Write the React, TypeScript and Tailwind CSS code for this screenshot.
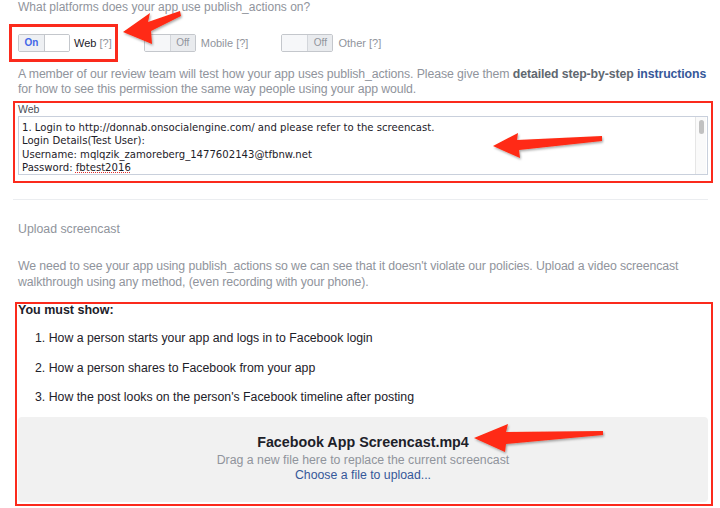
import React from "react";

function Toggle({ on }: { on: boolean }) {
  return (
    <div className="flex h-[18px] w-[52px] shrink-0 rounded-[2px] border border-[#c4c7cc] overflow-hidden text-[10px] leading-[16px]">
      {on ? (
        <>
          <div className="w-[26px] bg-[#eef0f3] text-[#4267e8] font-bold text-center border-r border-[#c4c7cc]">On</div>
          <div className="flex-1 bg-white" />
        </>
      ) : (
        <>
          <div className="w-[26px] bg-[#f6f7f9] border-r border-[#d3d6db]" />
          <div className="flex-1 bg-[#e9ebee] text-[#90949c] text-center">Off</div>
        </>
      )}
    </div>
  );
}

export default function App() {
  return (
    <div
      className="relative w-[720px] h-[508px] overflow-hidden bg-white text-[#90949c]"
      style={{ fontFamily: '"Liberation Sans", Arial, sans-serif' }}
    >
      <div className="pl-[18px] text-[12px] leading-[14px] pt-0">What platforms does your app use publish_actions on?</div>

      <div className="flex items-center mt-[10px] whitespace-nowrap">
        <div className="ml-[9px] flex items-center gap-[4px] border-[3px] border-[#fb2a1c] pl-[6px] pr-[3px] py-[7px] h-[38px]">
          <Toggle on />
          <span className="text-[11px] text-[#1d2129]">Web <span className="text-[#90949c]">[?]</span></span>
        </div>
        <div className="ml-[26px] flex items-center gap-[5px]">
          <Toggle on={false} />
          <span className="text-[11px]">Mobile [?]</span>
        </div>
        <div className="ml-[33px] flex items-center gap-[5px]">
          <Toggle on={false} />
          <span className="text-[11px]">Other [?]</span>
        </div>
      </div>

      <div className="pl-[18px] pr-[10px] mt-[5px] text-[12.3px] leading-[15px] tracking-[-0.1px]">
        A member of our review team will test how your app uses publish_actions. Please give them{" "}
        <span className="font-bold text-[#606770]">detailed step-by-step</span>{" "}
        <span className="font-bold text-[#365899]">instructions</span> for how to see this permission the same way people using your app would.
      </div>

      <div className="ml-[13px] mr-[7px] mt-[4px] border-[2px] border-[#fb2a1c] pl-[3px] pr-[3px] pb-[4px] h-[82px]">
        <div className="text-[10.5px] leading-[13px] text-[#4b4f56] pt-[0px]">Web</div>
        <div className="relative h-[59px] border border-[#c9d0dc] bg-white">
          <div
            className="pl-[3px] pt-[4px] text-[10.1px] leading-[13.4px] text-[#1d2129]"
            style={{ fontFamily: '"DejaVu Sans", sans-serif' }}
          >
            <div>1. Login to http://donnab.onsocialengine.com/ and please refer to the screencast.</div>
            <div>Login Details(Test User):</div>
            <div>Username: mqlqzik_zamoreberg_1477602143@tfbnw.net</div>
            <div>
              Password: <span className="underline decoration-dotted decoration-[#e03030]">fbtest2016</span>
            </div>
          </div>
          <div className="absolute right-[1px] top-0 bottom-0 w-[11px] border-l border-[#e6e6e6] bg-[#fafafa]">
            <div className="mx-auto mt-[3px] w-[5px] h-[14px] rounded-full bg-[#c1c1c1]" />
          </div>
        </div>
      </div>

      <div className="ml-[13px] mr-[12px] mt-[16px] h-px bg-[#ebedf0]" />

      <div className="pl-[18px] mt-[22px] text-[12.3px] leading-[15px]">Upload screencast</div>

      <div className="pl-[18px] pr-[20px] mt-[21px] text-[12.3px] leading-[16px] tracking-[-0.1px]">
        We need to see your app using publish_actions so we can see that it doesn't violate our policies. Upload a video screencast walkthrough using any method, (even recording with your phone).
      </div>

      <div className="ml-[15px] mr-[7px] mt-[12px] h-[204px] border-[2px] border-[#fb2a1c] pl-[1px] pr-[3px] pb-[2px] flex flex-col">
        <div className="text-[12.5px] leading-[14px] font-bold text-[#1d2129] -mt-[1px]">You must show:</div>
        <div className="pl-[17px] text-[12.3px] leading-[15px] text-[#1d2129]">
          <div className="mt-[14px]">1. How a person starts your app and logs in to Facebook login</div>
          <div className="mt-[14.5px]">2. How a person shares to Facebook from your app</div>
          <div className="mt-[14.5px]">3. How the post looks on the person's Facebook timeline after posting</div>
        </div>
        <div className="mt-auto h-[85px] rounded-[4px] bg-[#f1f1f1] flex flex-col items-center pt-[16px]">
          <div className="text-[14.3px] leading-[18px] font-bold text-[#1d2129]">Facebook App Screencast.mp4</div>
          <div className="mt-[2px] text-[12.3px] leading-[15px] text-[#90949c]">Drag a new file here to replace the current screencast</div>
          <div className="text-[12.3px] leading-[15px] text-[#365899]">Choose a file to upload...</div>
        </div>
      </div>

      <svg className="absolute inset-0 pointer-events-none" width="720" height="508" viewBox="0 0 720 508">
        <defs>
          <filter id="sh" x="-20%" y="-20%" width="140%" height="140%">
            <feDropShadow dx="1" dy="1.5" stdDeviation="1" floodColor="#000" floodOpacity="0.35" />
          </filter>
        </defs>
        <g fill="#ff2a12" filter="url(#sh)">
          <polygon points="123,32 150,13 148,22 180,11 181,16 151,31 152,44" />
          <polygon points="493,146 518,133 517,140 602,136 602,141 519,150 520,158" />
          <polygon points="474,438 508,424 506,432 603,431 603,435 506,444 505,452" />
        </g>
      </svg>
    </div>
  );
}
